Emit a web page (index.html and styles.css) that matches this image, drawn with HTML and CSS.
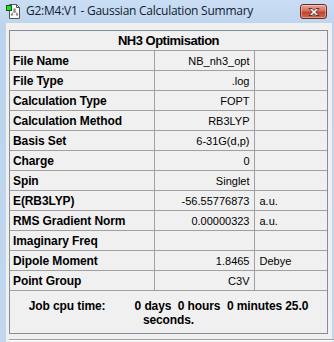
FILE: index.html
```html
<!DOCTYPE html>
<html>
<head>
<meta charset="utf-8">
<link rel="stylesheet" href="styles.css">
</head>
<body>
<div class="window">
  <div class="titlebar">
    <svg class="appicon" width="16" height="16" viewBox="0 0 16 16">
      <path d="M3.5 1.5h7l3 3v11h-10z" fill="#fff" stroke="#555" stroke-width="1"/>
      <path d="M10.5 1.5v3h3" fill="none" stroke="#555" stroke-width="1"/>
      <circle cx="8.5" cy="6.5" r="1.2" fill="#888"/>
      <circle cx="6" cy="11.5" r="1.2" fill="#888"/>
      <circle cx="11" cy="11.5" r="1.2" fill="#888"/>
      <path d="M8.5 6.5L6 11.5M8.5 6.5L11 11.5M8.5 6.5V10" stroke="#999" stroke-width="1"/>
      <rect x="0.5" y="2.5" width="5" height="5" fill="#22dd22" stroke="#135c13" stroke-width="1"/>
    </svg>
    <span class="title">G2:M4:V1 - Gaussian Calculation Summary</span>
    <div class="close">
      <svg width="14" height="10" viewBox="0 0 14 10">
        <path d="M2 1.5h3l2 2 2-2h3l-3.3 3.5 3.3 3.5h-3l-2-2-2 2h-3l3.3-3.5z" fill="#fff" stroke="#5a2626" stroke-width="0.9" stroke-linejoin="round"/>
      </svg>
    </div>
  </div>
  <div class="client">
    <div class="summary">
      <div class="caption">NH3 Optimisation</div>
      <table class="grid">
        <colgroup><col class="c1"><col class="c2"><col class="c3"></colgroup>
        <tr><td class="lbl">File Name</td><td class="val">NB_nh3_opt</td><td class="unit"></td></tr>
        <tr><td class="lbl">File Type</td><td class="val">.log</td><td class="unit"></td></tr>
        <tr><td class="lbl">Calculation Type</td><td class="val">FOPT</td><td class="unit"></td></tr>
        <tr><td class="lbl">Calculation Method</td><td class="val">RB3LYP</td><td class="unit"></td></tr>
        <tr><td class="lbl">Basis Set</td><td class="val">6-31G(d,p)</td><td class="unit"></td></tr>
        <tr><td class="lbl">Charge</td><td class="val">0</td><td class="unit"></td></tr>
        <tr><td class="lbl">Spin</td><td class="val">Singlet</td><td class="unit"></td></tr>
        <tr><td class="lbl">E(RB3LYP)</td><td class="val">-56.55776873</td><td class="unit">a.u.</td></tr>
        <tr><td class="lbl">RMS Gradient Norm</td><td class="val">0.00000323</td><td class="unit">a.u.</td></tr>
        <tr><td class="lbl">Imaginary Freq</td><td class="val"></td><td class="unit"></td></tr>
        <tr><td class="lbl">Dipole Moment</td><td class="val">1.8465</td><td class="unit">Debye</td></tr>
        <tr><td class="lbl">Point Group</td><td class="val">C3V</td><td class="unit"></td></tr>
      </table>
      <div class="cpu">Job cpu time:         0 days  0 hours  0 minutes 25.0 seconds.</div>
    </div>
    <div class="sep"></div>
  </div>
</div>
</body>
</html>
```
FILE: styles.css
```css
html, body {
  margin: 0;
  padding: 0;
}
body {
  width: 334px;
  height: 342px;
  overflow: hidden;
  background: #c1d7ef;
  font-family: "Liberation Sans", Arial, sans-serif;
}
.window {
  display: flex;
  flex-direction: column;
  height: 342px;
  background: linear-gradient(#c9def4, #bcd3ed 30px, #c1d7ef);
}
.titlebar {
  height: 23px;
  display: flex;
  align-items: center;
  position: relative;
  padding-left: 6px;
  box-sizing: border-box;
}
.appicon {
  flex: none;
  margin-top: -2px;
}
.title {
  font-family: "Open Sans", "Noto Sans", sans-serif;
  font-size: 12px;
  letter-spacing: -0.25px;
  color: #141a2e;
  margin-left: 4px;
  margin-top: -3px;
  white-space: nowrap;
}
.close {
  position: absolute;
  left: 300px;
  top: 4px;
  width: 27px;
  height: 15px;
  box-sizing: border-box;
  border: 1px solid #6b2a2a;
  border-radius: 3px;
  background: linear-gradient(#e9a596, #d4705d 45%, #c2432e 55%, #cf6a4f);
  box-shadow: inset 0 0 0 1px rgba(255,255,255,0.35);
  display: flex;
  align-items: center;
  justify-content: center;
}
.client {
  flex: 1;
  margin-left: 6px;
  margin-right: 2px;
  background: #f0f0f0;
  padding: 7px 0 0 3px;
}
.summary {
  width: 319px;
  box-sizing: border-box;
  border: 1px solid #888c94;
  background: #f0f0f0;
}
.caption {
  height: 19px;
  line-height: 19px;
  border-bottom: 1px solid #a0a0a0;
  text-align: center;
  font-weight: bold;
  font-size: 13px;
  letter-spacing: -0.5px;
  color: #000;
}
.grid {
  border-collapse: collapse;
  width: 100%;
  table-layout: fixed;
}
.c1 { width: 144px; }
.c2 { width: 100px; }
.grid td {
  height: 19px;
  padding: 0;
  border-bottom: 1px solid #a0a0a0;
  border-right: 1px solid #a0a0a0;
  font-size: 11px;
  color: #000;
  white-space: nowrap;
  overflow: hidden;
}
.grid td.unit {
  border-right: none;
  padding-left: 5px;
}
.grid td.lbl {
  font-weight: bold;
  font-size: 12px;
  letter-spacing: -0.1px;
  padding-left: 3px;
}
.grid td.val {
  text-align: right;
  padding-right: 4px;
}
.cpu {
  height: 42px;
  box-sizing: border-box;
  padding: 8px 4px 0 4px;
  text-align: center;
  white-space: pre-wrap;
  font-weight: bold;
  font-size: 12px;
  letter-spacing: -0.1px;
  line-height: 14px;
  color: #000;
}
.sep {
  margin-top: 5px;
  width: 325px;
  border-top: 1px solid #a0a0a0;
  border-bottom: 1px solid #fff;
}
```
